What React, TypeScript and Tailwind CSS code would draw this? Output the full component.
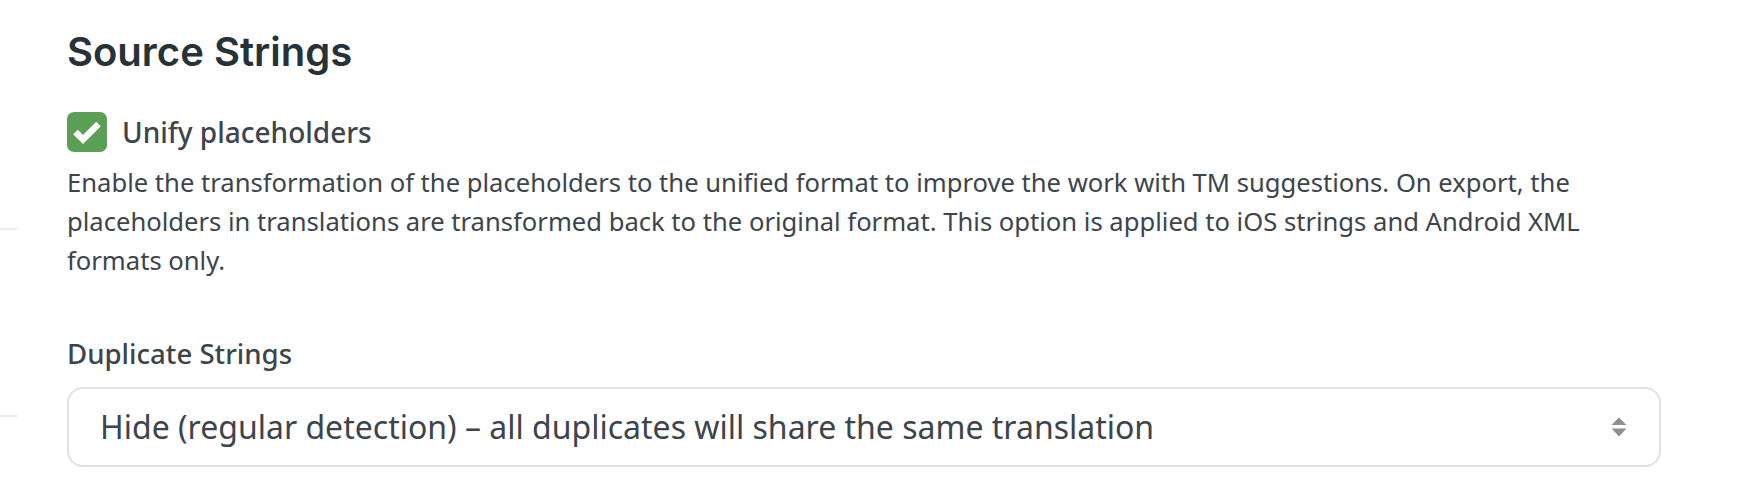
import { useState } from 'react';

const body = { fontFamily: '"Noto Sans", "Open Sans", sans-serif' };

function SortIcon() {
  return (
    <svg width="16" height="20" viewBox="0 0 16 20" className="shrink-0">
      <path d="M8 0.5 L15.5 8 H0.5 Z" fill="#8b9095" />
      <path d="M0.5 11.5 H15.5 L8 19.5 Z" fill="#8b9095" />
    </svg>
  );
}

export default function App() {
  const [unify, setUnify] = useState(true);

  return (
    <div className="flex min-h-[480px] w-full bg-white text-[#3d444b]" style={body}>
      {/* edge of the settings sidebar */}
      <aside className="flex w-[17px] shrink-0 flex-col">
        <div className="mt-[228px] h-[2px] bg-[#ececec]" />
        <div className="mt-[185px] h-[2px] bg-[#ececec]" />
      </aside>

      <main className="flex w-[1644px] flex-col pl-[50px] pt-[28px]">
        <h2
          className="text-[40px] font-semibold leading-[48px] text-[#263238]"
          style={{ fontFamily: 'Inter, sans-serif' }}
        >
          Source Strings
        </h2>

        <label className="mt-[36px] flex cursor-pointer items-center gap-[15px]">
          <button
            type="button"
            onClick={() => setUnify(!unify)}
            className={`flex h-[40px] w-[40px] items-center justify-center rounded-[7px] ${
              unify ? 'bg-[#5b9f55]' : 'border-2 border-[#c8ccd0] bg-white'
            }`}
          >
            {unify && (
              <svg width="40" height="40" viewBox="0 0 40 40">
                <path
                  d="M8.5 20 L16 27.5 L31.5 12"
                  fill="none"
                  stroke="white"
                  strokeWidth="6.5"
                  strokeLinecap="butt"
                  strokeLinejoin="miter"
                />
              </svg>
            )}
          </button>
          <span className="text-[28px] font-medium leading-[40px] text-[#3d444b]">Unify placeholders</span>
        </label>

        <p className="mt-[11px] text-[25.6px] leading-[39px] text-[#3d444b]">
          Enable the transformation of the placeholders to the unified format to improve the work with TM
          suggestions. On export, the placeholders in translations are transformed back to the original format.
          This option is applied to iOS strings and Android XML formats only.
        </p>

        <div className="mt-[54px] text-[27.6px] font-medium leading-[39px] text-[#3d444b]">Duplicate Strings</div>

        <div className="mt-[14px] flex h-[80px] items-center justify-between rounded-[16px] border-2 border-[#e2e2e2] pl-[31px] pr-[32px]">
          <span className="text-[32px] leading-[40px] text-[#3d444b]">
            Hide (regular detection) – all duplicates will share the same translation
          </span>
          <SortIcon />
        </div>
      </main>
    </div>
  );
}
